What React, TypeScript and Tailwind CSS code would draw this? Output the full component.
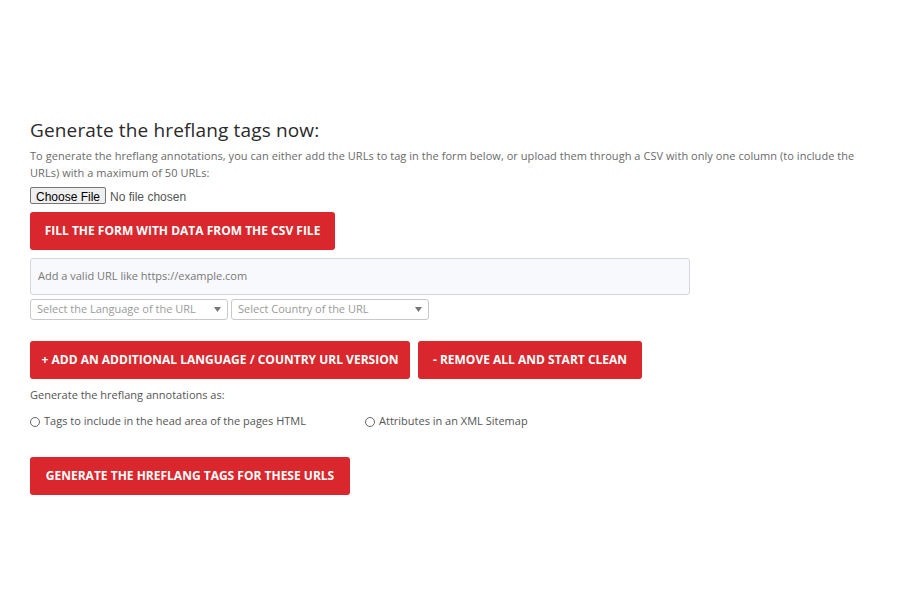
import React from "react";

const Btn = ({ children, w }: { children: React.ReactNode; w: string }) => (
  <button
    className={`${w} h-[38px] rounded-[3px] bg-[#d9272d] text-white font-bold text-[12px] uppercase flex items-center justify-center whitespace-nowrap`}
  >
    {children}
  </button>
);

export default function App() {
  return (
    <div className="w-[900px] h-[600px] bg-white" style={{ fontFamily: '"Open Sans", "DejaVu Sans", sans-serif' }}>
      <div className="pt-[118px] pl-[30px] w-[870px]">
        <h2 className="text-[19px] leading-[24px] text-[#2a2a2a] font-normal tracking-[0.15px]">Generate the hreflang tags now:</h2>
        <p className="mt-[5px] text-[11px] leading-[17px] text-[#6a6a6a] w-[830px] tracking-[0.05px]">
          To generate the hreflang annotations, you can either add the URLs to tag in the form below, or upload them through a CSV with only one column (to include the URLs) with a maximum of 50 URLs:
        </p>
        <div className="mt-[6px] h-[18px] flex items-center">
          <input
            type="file"
            className="text-[12px] text-[#555] file:mr-[4px] file:h-[17px] file:px-[5px] file:border file:border-solid file:border-[#767676] file:bg-[#efefef] file:rounded-[2px] file:text-[12px] file:text-black"
            style={{ fontFamily: '"Liberation Sans", Arial, sans-serif' }}
          />
        </div>
        <div className="mt-[7px]">
          <Btn w="w-[305px]">Fill the form with data from the CSV file</Btn>
        </div>
        <div className="mt-[8px] w-[660px] h-[37px] rounded-[3px] border border-[#d3d7dc] bg-[#f7f9fc] flex items-center px-[7px] text-[11px] text-[#777]">
          Add a valid URL like https://example.com
        </div>
        <div className="mt-[4px] flex gap-[3px]">
          {["Select the Language of the URL", "Select Country of the URL"].map((t) => (
            <div key={t} className="w-[198px] h-[21px] rounded-[3px] border border-[#c9c9c9] flex items-center justify-between pl-[6px] pr-[6px] text-[11px] text-[#9a9a9a]">
              <span>{t}</span>
              <svg width="7" height="5" viewBox="0 0 7 5"><path d="M0 0h7L3.5 5z" fill="#777" /></svg>
            </div>
          ))}
        </div>
        <div className="mt-[21px] flex gap-[8px]">
          <Btn w="w-[380px]">+ Add an additional language / country URL version</Btn>
          <Btn w="w-[224px]">- Remove all and start clean</Btn>
        </div>
        <p className="mt-[7px] text-[11px] leading-[17px] text-[#555]">Generate the hreflang annotations as:</p>
        <div className="mt-[10px] flex text-[11px] text-[#555] h-[17px] items-center">
          <label className="flex items-center gap-[4px] w-[335px]">
            <span className="w-[10px] h-[10px] rounded-full border border-[#666]" />
            Tags to include in the head area of the pages HTML
          </label>
          <label className="flex items-center gap-[4px]">
            <span className="w-[10px] h-[10px] rounded-full border border-[#666]" />
            Attributes in an XML Sitemap
          </label>
        </div>
        <div className="mt-[27px]">
          <Btn w="w-[320px]">Generate the hreflang tags for these URLs</Btn>
        </div>
      </div>
    </div>
  );
}
